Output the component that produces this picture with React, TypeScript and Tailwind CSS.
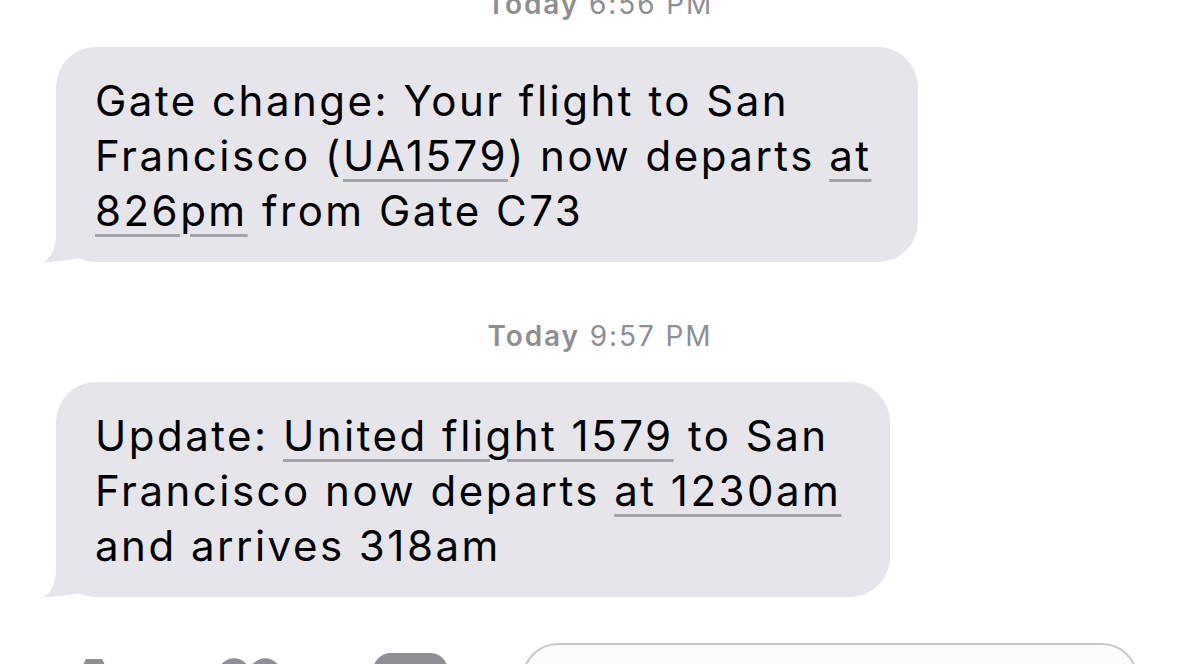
import React from "react";

const link =
  "underline decoration-[#a3a3a8] decoration-[3px] underline-offset-[8px]";

function Tail() {
  return (
    <svg
      className="absolute left-[-14px] bottom-0"
      width="62"
      height="50"
      viewBox="0 0 62 50"
    >
      <path
        d="M14,0 L14,22 C14,37 9,45 2,50 C14,50 26,48 38,46 C45,48 52,50 62,50 L62,0 Z"
        fill="#e5e5ea"
      />
    </svg>
  );
}

function Bubble({ width, children }: { width: string; children: React.ReactNode }) {
  return (
    <div className={`relative ml-[56px] ${width}`}>
      <Tail />
      <div className="relative rounded-[40px] bg-[#e5e5ea] pl-[39px] pt-[26px] pb-[24px] text-[42px] leading-[55px] tracking-[2.5px] text-black">
        {children}
      </div>
    </div>
  );
}

function Stamp({ time, className }: { time: string; className?: string }) {
  return (
    <div className={`text-center text-[28px] leading-[34px] tracking-[1.9px] text-[#8e8e93] ${className ?? ""}`}>
      <span className="font-semibold">Today</span> {time}
    </div>
  );
}

export default function App() {
  return (
    <div
      className="w-[1200px] h-[664px] overflow-hidden bg-white"
      style={{ fontFamily: "Inter, 'Liberation Sans', sans-serif" }}
    >
      <Stamp time="6:56 PM" className="-mt-[13px]" />

      <div className="mt-[26px]">
        <Bubble width="w-[862px]">
          Gate change: Your flight to San
          <br />
          Francisco (<span className={link}>UA1579</span>) now departs{" "}
          <span className={link}>at</span>
          <br />
          <span className={link}>826pm</span> from Gate C73
        </Bubble>
      </div>

      <Stamp time="9:57 PM" className="mt-[57px]" />

      <div className="mt-[29px]">
        <Bubble width="w-[834px]">
          Update: <span className={link}>United flight 1579</span> to San
          <br />
          Francisco now departs <span className={link}>at 1230am</span>
          <br />
          and arrives 318am
        </Bubble>
      </div>

      {/* input bar, mostly cut off */}
      <div className="mt-[46px] flex items-start pl-[62px]">
        <svg className="mt-[16px]" width="64" height="50" viewBox="0 0 64 50">
          <path d="M20,8 L24,0 L40,0 L44,8 L58,8 Q64,8 64,14 L64,50 L0,50 L0,14 Q0,8 6,8 Z" fill="#8e8e93" />
        </svg>
        <svg className="ml-[91px] mt-[14px]" width="65" height="56" viewBox="0 0 65 56">
          <path
            d="M32.5,12 C28,2 18,0 12,2 C4,5 0,12 0,20 C0,34 16,46 32.5,56 C49,46 65,34 65,20 C65,12 61,5 53,2 C47,0 37,2 32.5,12 Z"
            fill="#8e8e93"
          />
        </svg>
        <div className="ml-[91px] mt-[10px] h-[75px] w-[75px] rounded-[18px] bg-[#8e8e93]" />
        <div className="ml-[74px] flex h-[100px] w-[616px] justify-end rounded-[36px] border-2 border-[#c8c8cc] bg-[#fbfbfb] pr-[13px] pt-[22px]">
          <div className="h-[57px] w-[57px] rounded-full bg-[#8e8e93]" />
        </div>
      </div>
    </div>
  );
}
